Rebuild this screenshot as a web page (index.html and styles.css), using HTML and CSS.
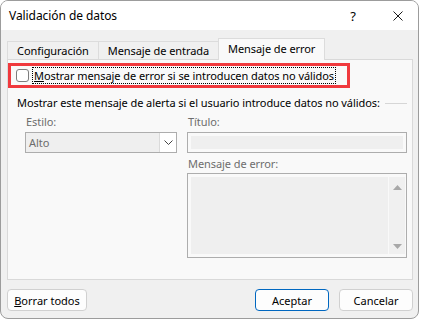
FILE: index.html
```html
<!DOCTYPE html>
<html lang="es">
<head>
  <meta charset="UTF-8">
  <title>Validación de datos</title>
  <link rel="stylesheet" href="styles.css">
</head>
<body>
  <div class="window">
    <div class="titlebar">
      <span class="title">Validación de datos</span>
      <span class="caption help">?</span>
      <span class="caption close">
        <svg width="10" height="10" viewBox="0 0 10 10"><path d="M0.5 0.5L9.5 9.5M9.5 0.5L0.5 9.5" stroke="#1a1a1a" stroke-width="1" fill="none"/></svg>
      </span>
    </div>

    <div class="content">
      <div class="tabs">
        <div class="tab">Configuración</div>
        <div class="tab">Mensaje de entrada</div>
        <div class="tab active">Mensaje de error</div>
      </div>

      <div class="panel">
        <div class="highlight">
          <span class="checkbox"></span>
          <span class="check-label"><u>M</u>ostrar mensaje de error si se introducen datos no válidos</span>
        </div>

        <div class="group-title">
          <span>Mostrar este mensaje de alerta si el usuario introduce datos no válidos:</span>
          <span class="group-line"></span>
        </div>

        <div class="fields">
          <div class="field">
            <div class="field-label">Estilo:</div>
            <div class="select">
              <span class="select-value">Alto</span>
              <span class="select-btn">
                <svg width="9" height="5" viewBox="0 0 9 5"><path d="M0.5 0.5L4.5 4.5L8.5 0.5" stroke="#444" stroke-width="1" fill="none"/></svg>
              </span>
            </div>
          </div>
          <div class="field">
            <div class="field-label">Título:</div>
            <div class="input"><div class="input-fill"></div></div>
            <div class="field-label spaced">Mensaje de error:</div>
            <div class="input textarea">
              <div class="input-fill"></div>
              <div class="scrollbar">
                <svg width="9" height="5" viewBox="0 0 9 5"><path d="M0 5L4.5 0L9 5Z" fill="#a8a8a8"/></svg>
                <svg width="9" height="5" viewBox="0 0 9 5"><path d="M0 0L4.5 5L9 0Z" fill="#a8a8a8"/></svg>
              </div>
            </div>
          </div>
        </div>
      </div>

      <div class="footer">
        <button class="btn"><u>B</u>orrar todos</button>
        <div class="spacer"></div>
        <button class="btn default">Aceptar</button>
        <button class="btn">Cancelar</button>
      </div>
    </div>
  </div>
</body>
</html>
```

FILE: styles.css
```css
body {
  margin: 0;
  background: #ffffff;
  font-family: "Noto Sans", sans-serif;
  font-size: 11px;
  letter-spacing: -0.07px;
  color: #000;
}
.window {
  width: 419px;
  height: 319px;
  box-sizing: border-box;
  border: 1px solid #9c9c9c;
  border-radius: 8px;
  overflow: hidden;
  background: #f0f0f0;
  display: flex;
  flex-direction: column;
}
.titlebar {
  height: 29px;
  flex: none;
  background: #ffffff;
  display: flex;
  align-items: center;
  padding-left: 8px;
}
.title {
  flex: 1;
  font-size: 12px;
}
.caption {
  display: flex;
  justify-content: center;
  align-items: center;
}
.help {
  width: 50px;
  font-size: 13px;
}
.close {
  width: 40px;
}
.content {
  flex: 1;
  padding: 8px 5px 0 6px;
  display: flex;
  flex-direction: column;
}
.tabs {
  display: flex;
  align-items: flex-end;
  height: 21px;
}
.tab {
  height: 17px;
  line-height: 17px;
  padding: 0 9px;
  border: 1px solid #dcdcdc;
  border-bottom: none;
  margin-right: -1px;
  background: #f0f0f0;
  white-space: nowrap;
}
.tab.active {
  height: 21px;
  line-height: 20px;
  background: #f9f9f9;
  position: relative;
  margin-bottom: -1px;
  z-index: 1;
}
.panel {
  height: 221px;
  box-sizing: border-box;
  border: 1px solid #d9d9d9;
  background: #f9f9f9;
}
.highlight {
  width: 342px;
  height: 25px;
  box-sizing: border-box;
  margin-top: 3px;
  border: 3px solid #f0393d;
  display: flex;
  align-items: center;
  padding-left: 5px;
}
.checkbox {
  width: 11px;
  height: 11px;
  border: 1px solid #7d7d7d;
  border-radius: 3px;
  background: #ffffff;
  margin-right: 4px;
}
.check-label {
  outline: 1px dotted #000;
  padding: 0 1px;
  line-height: 15px;
  white-space: nowrap;
}
.group-title {
  margin: 7px 5px 0 9px;
  display: flex;
  align-items: center;
  line-height: 16px;
  white-space: nowrap;
}
.group-line {
  flex: 1;
  height: 1px;
  background: #d6d6d6;
  margin-left: 5px;
}
.fields {
  margin: 3px 5px 0 17px;
  display: grid;
  grid-template-columns: 152px 1fr;
  column-gap: 10px;
}
.field-label {
  color: #6d6d6d;
  line-height: 16px;
  padding-left: 1px;
  margin-bottom: 2px;
}
.field-label.spaced {
  margin-top: 3px;
  margin-bottom: 1px;
}
.select {
  height: 21px;
  box-sizing: border-box;
  border: 1px solid #adadad;
  background: #efefef;
  display: flex;
}
.select-value {
  flex: 1;
  color: #6d6d6d;
  padding-left: 3px;
  line-height: 19px;
}
.select-btn {
  width: 16px;
  background: #ffffff;
  border-left: 1px solid #dadada;
  display: flex;
  align-items: center;
  justify-content: center;
}
.input {
  height: 21px;
  box-sizing: border-box;
  border: 1px solid #adadad;
  background: #f9f9f9;
  padding: 3px;
  display: flex;
}
.input-fill {
  flex: 1;
  background: #efefef;
}
.textarea {
  height: 85px;
  padding-right: 1px;
}
.scrollbar {
  width: 16px;
  margin-left: 1px;
  background: #f0f0f0;
  display: flex;
  flex-direction: column;
  justify-content: space-between;
  align-items: center;
  padding: 8px 0 5px;
}
.footer {
  display: flex;
  padding-top: 9px;
}
.spacer {
  flex: 1;
}
.btn {
  height: 22px;
  box-sizing: border-box;
  border: 1px solid #d0d0d0;
  border-radius: 4px;
  background: #fdfdfd;
  font-family: "Noto Sans", sans-serif;
  font-size: 11px;
  color: #000;
  padding: 0;
  width: 74px;
}
.btn:first-child {
  width: 80px;
}
.btn.default {
  border-color: #0067c0;
  margin-right: 10px;
}
```
